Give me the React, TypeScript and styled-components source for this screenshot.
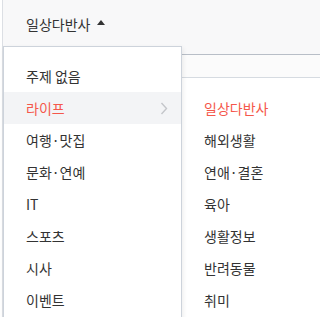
import React from "react"
import styled, { createGlobalStyle } from "styled-components"

const GlobalStyle = createGlobalStyle`
    body {
        margin: 0;
        background: #ffffff;
        font-family: "Noto Sans CJK KR", "Noto Sans", sans-serif;
        color: #333333;
    }
`

const topics = ["주제 없음", "라이프", "여행·맛집", "문화·연예", "IT", "스포츠", "시사", "이벤트"]
const lifeTopics = ["일상다반사", "해외생활", "연애·결혼", "육아", "생활정보", "반려동물", "취미"]

export default function App() {
    return (
        <Page>
            <GlobalStyle />
            <Frame>
                <Header>
                    <Selected>일상다반사</Selected>
                    <Caret />
                </Header>
                <Body />
                <Dropdown>
                    {topics.map((t) => (
                        <Item key={t} active={t === "라이프"}>
                            <Label active={t === "라이프"}>{t}</Label>
                            {t === "라이프" && <Chevron />}
                        </Item>
                    ))}
                </Dropdown>
                <SubMenu>
                    {lifeTopics.map((t, i) => (
                        <SubItem key={t}>
                            <Label active={i === 0}>{t}</Label>
                        </SubItem>
                    ))}
                </SubMenu>
            </Frame>
        </Page>
    )
}

const Chevron = () => (
    <ChevronSvg width="8" height="13" viewBox="0 0 8 13">
        <path d="M1.5 1 L6.5 6.5 L1.5 12" fill="none" stroke="#c4c6ca" strokeWidth="1.4" />
    </ChevronSvg>
)

const Page = styled.div`
    padding-left: 2px;
    height: 317px;
    overflow: hidden;
`

const Frame = styled.div`
    position: relative;
    height: 100%;
    border-left: 1px solid #dcdfe4;
    display: flex;
    flex-direction: column;
`

const Header = styled.div`
    height: 55px;
    box-sizing: border-box;
    background: #f8f8f9;
    border-bottom: 1px solid #b8bec7;
    display: flex;
    align-items: center;
    padding: 0 0 7px 23px;
    gap: 7px;
`

const Selected = styled.span`
    font-size: 14px;
    color: #333333;
`

const Caret = styled.span`
    width: 0;
    height: 0;
    border-left: 4px solid transparent;
    border-right: 4px solid transparent;
    border-bottom: 5px solid #333333;
    margin-bottom: 3px;
`

const Body = styled.div`
    flex: 1;
    background: #fbfbfb;
`

const Dropdown = styled.ul`
    position: absolute;
    left: 0;
    top: 46px;
    width: 179px;
    height: 300px;
    box-sizing: border-box;
    margin: 0;
    padding: 13px 0 0;
    list-style: none;
    background: #ffffff;
    border: 1px solid #cdd3db;
    box-shadow: 1px 2px 5px rgba(0, 0, 0, 0.08);
    z-index: 2;
`

const Item = styled.li<{ active?: boolean }>`
    height: 32px;
    display: flex;
    align-items: center;
    justify-content: space-between;
    padding: 0 13px 0 22px;
    background: ${({ active }) => (active ? "#f3f4f6" : "transparent")};
`

const Label = styled.span<{ active?: boolean }>`
    font-size: 14px;
    line-height: 20px;
    color: ${({ active }) => (active ? "#f5574b" : "#333333")};
`

const ChevronSvg = styled.svg`
    display: block;
`

const SubMenu = styled.ul`
    position: absolute;
    left: 178px;
    right: 0;
    top: 77px;
    bottom: 0;
    margin: 0;
    padding: 14px 0 0;
    list-style: none;
    background: #ffffff;
    border-top: 1px solid #d6dbe1;
    z-index: 1;
`

const SubItem = styled.li`
    height: 32px;
    display: flex;
    align-items: center;
    padding-left: 23px;
`
